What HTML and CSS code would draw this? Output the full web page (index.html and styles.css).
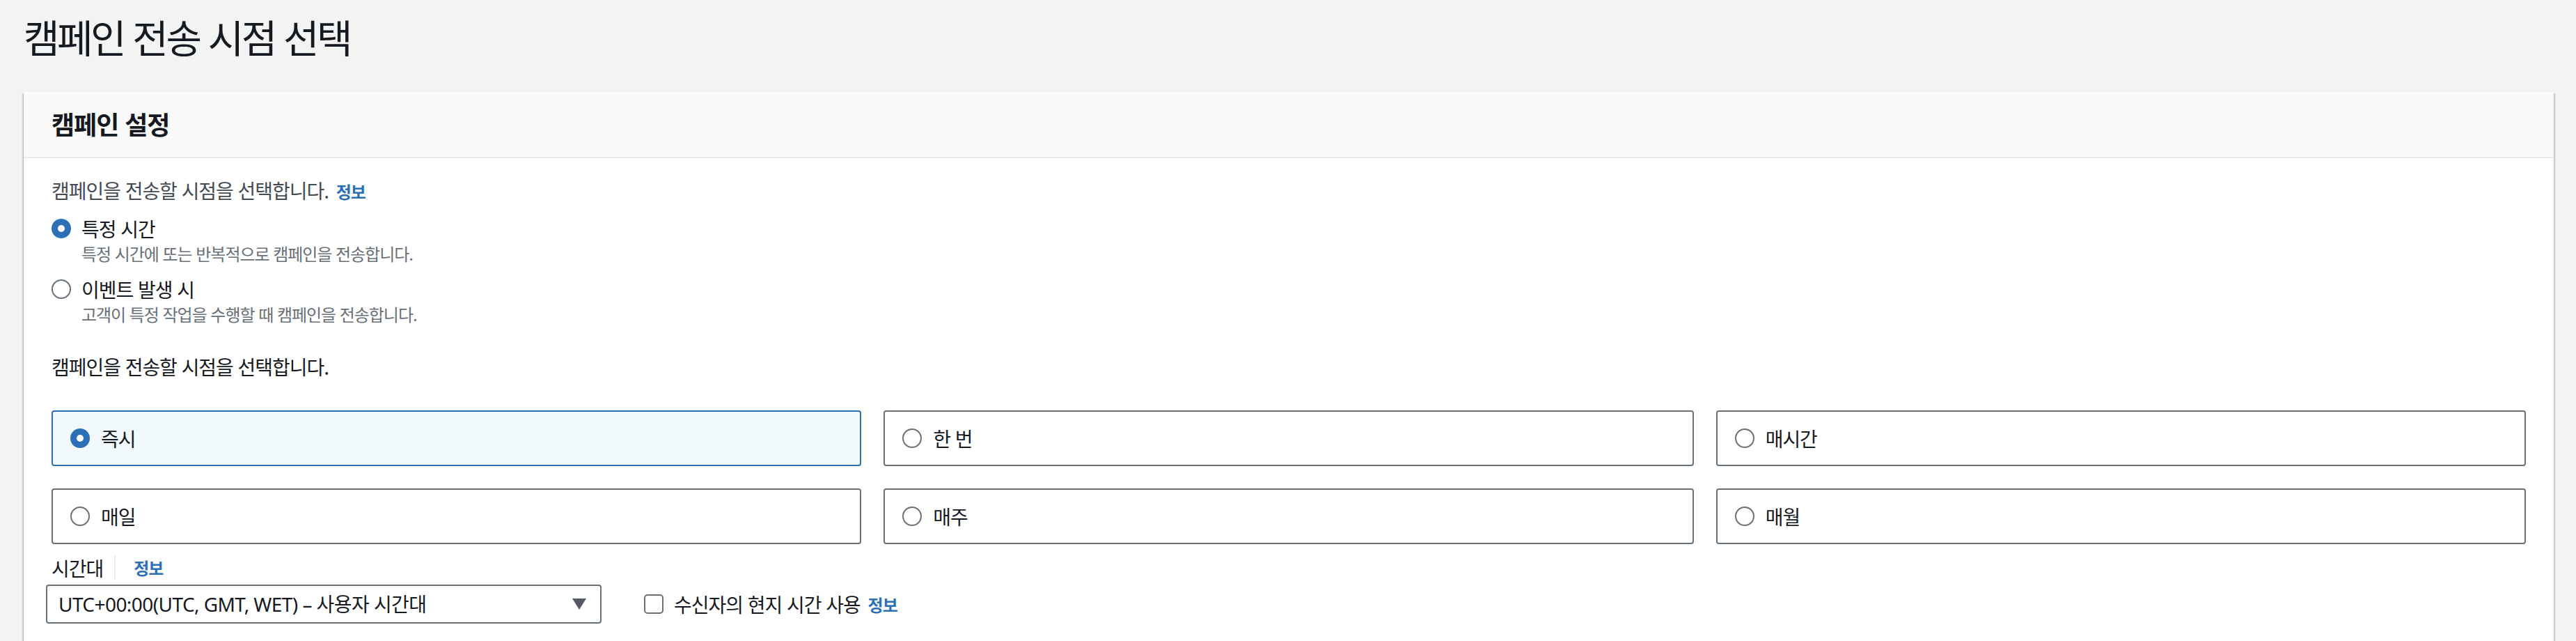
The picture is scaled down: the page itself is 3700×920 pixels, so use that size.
FILE: index.html
```html
<!DOCTYPE html>
<html lang="ko">
<head>
<meta charset="utf-8">
<title>캠페인 전송 시점 선택</title>
<link rel="stylesheet" href="styles.css">
</head>
<body>
<div class="page">
  <h1 class="page-title">캠페인 전송 시점 선택</h1>
  <section class="card">
    <header class="card-header">
      <h2 class="card-title">캠페인 설정</h2>
    </header>
    <div class="card-body">
      <div class="field-desc">캠페인을 전송할 시점을 선택합니다. <a class="info" href="#">정보</a></div>
      <div class="radio-group">
        <label class="radio-item">
          <span class="radio checked"></span>
          <span class="radio-text">
            <span class="radio-label">특정 시간</span>
            <span class="radio-desc">특정 시간에 또는 반복적으로 캠페인을 전송합니다.</span>
          </span>
        </label>
        <label class="radio-item">
          <span class="radio"></span>
          <span class="radio-text">
            <span class="radio-label">이벤트 발생 시</span>
            <span class="radio-desc">고객이 특정 작업을 수행할 때 캠페인을 전송합니다.</span>
          </span>
        </label>
      </div>

      <div class="section-label">캠페인을 전송할 시점을 선택합니다.</div>

      <div class="tiles">
        <div class="tile selected"><span class="radio checked"></span><span class="tile-label">즉시</span></div>
        <div class="tile"><span class="radio"></span><span class="tile-label">한 번</span></div>
        <div class="tile"><span class="radio"></span><span class="tile-label">매시간</span></div>
        <div class="tile"><span class="radio"></span><span class="tile-label">매일</span></div>
        <div class="tile"><span class="radio"></span><span class="tile-label">매주</span></div>
        <div class="tile"><span class="radio"></span><span class="tile-label">매월</span></div>
      </div>

      <div class="tz-label"><span class="tz-text">시간대</span><a class="info tz-info" href="#">정보</a></div>
      <div class="tz-row">
        <div class="select">
          <span class="select-value">UTC+00:00(UTC, GMT, WET) – 사용자 시간대</span>
          <svg class="select-arrow" width="20" height="16" viewBox="0 0 20 16"><path d="M0 0 H20 L10 16 Z" fill="#545b64"/></svg>
        </div>
        <label class="check-item">
          <span class="checkbox"></span>
          <span class="check-label">수신자의 현지 시간 사용</span>
          <a class="info" href="#">정보</a>
        </label>
      </div>
    </div>
  </section>
</div>
</body>
</html>
```

FILE: styles.css
```css
* { box-sizing: border-box; }
html, body {
  margin: 0;
  padding: 0;
}
body {
  background: #f2f3f3;
  font-family: "Noto Sans CJK KR", "Noto Sans", sans-serif;
  color: #16191f;
  letter-spacing: -0.065em;
  overflow: hidden;
}
.page {
  padding: 0 32px 0 34px;
}
.page-title {
  margin: 0;
  padding-top: 12px;
  font-size: 56px;
  font-weight: 400;
  line-height: 80px;
  height: 132px;
  letter-spacing: -0.062em;
  color: #16191f;
}
.card {
  background: #fff;
  box-shadow: 0 2px 2px 0 rgba(0, 28, 36, 0.3), 2px 2px 2px 0 rgba(0, 28, 36, 0.15), -2px 2px 2px 0 rgba(0, 28, 36, 0.15);
  min-height: 900px;
}
.card-header {
  background: #fafafa;
  border-bottom: 2px solid #eaeded;
  height: 95px;
  padding: 0 40px;
  display: flex;
  align-items: center;
}
.card-title {
  margin: 0;
  font-size: 36px;
  font-weight: 700;
  line-height: 44px;
  padding-bottom: 4px;
}
.card-body {
  padding: 24px 40px 0 40px;
}
.field-desc {
  font-size: 28px;
  line-height: 44px;
  color: #444b53;
}
.info {
  color: #2c6fb6;
  font-weight: 700;
  font-size: 24px;
  text-decoration: none;
  margin-left: 4px;
}
.radio-group {
  display: flex;
  flex-direction: column;
  gap: 15px;
  margin-top: 11px;
}
.radio-item {
  display: flex;
  align-items: flex-start;
  gap: 15px;
}
.radio-item .radio {
  margin-top: 6px;
}
.radio {
  flex: none;
  width: 28px;
  height: 28px;
  border-radius: 50%;
  border: 2px solid #687078;
  background: #fff;
}
.radio.checked {
  border: 9px solid #2c6fb6;
}
.radio-text {
  display: flex;
  flex-direction: column;
}
.radio-label {
  font-size: 28px;
  line-height: 40px;
}
.radio-desc {
  font-size: 24px;
  line-height: 32px;
  color: #687078;
}
.section-label {
  margin-top: 37px;
  font-size: 28px;
  line-height: 44px;
  color: #16191f;
}
.tiles {
  margin-top: 41px;
  display: grid;
  grid-template-columns: repeat(3, 1fr);
  gap: 32px;
}
.tile {
  height: 80px;
  border: 2px solid #687078;
  border-radius: 4px;
  padding: 0 25px;
  display: flex;
  align-items: center;
  gap: 16px;
  background: #fff;
}
.tile.selected {
  border-color: #2c6fb6;
  background: #f1f9fd;
}
.tile-label {
  font-size: 28px;
  line-height: 40px;
}
.tz-label {
  margin-top: 12px;
  display: flex;
  align-items: center;
  font-size: 28px;
  line-height: 44px;
}
.tz-text {
  padding-right: 16px;
  border-right: 2px solid #eaeded;
  line-height: 34px;
}
.tz-info {
  margin-left: 26px;
}
.tz-row {
  margin-top: 2px;
  display: flex;
  align-items: center;
}
.select {
  margin-left: -8px;
  width: 798px;
  height: 56px;
  border: 2px solid #687078;
  border-radius: 4px;
  display: flex;
  align-items: center;
  justify-content: space-between;
  padding: 0 20px 0 16px;
  background: #fff;
}
.select-value {
  font-family: "Noto Sans", "Noto Sans CJK KR", sans-serif;
  font-size: 28px;
  line-height: 40px;
  letter-spacing: -0.02em;
  white-space: nowrap;
}
.select-arrow {
  display: block;
}
.check-item {
  margin-left: 61px;
  display: flex;
  align-items: center;
  gap: 15px;
}
.checkbox {
  width: 28px;
  height: 28px;
  border: 2px solid #687078;
  border-radius: 5px;
  background: #fff;
}
.check-label {
  font-size: 28px;
  line-height: 40px;
}
.check-item .info {
  margin-left: -4px;
}
```
